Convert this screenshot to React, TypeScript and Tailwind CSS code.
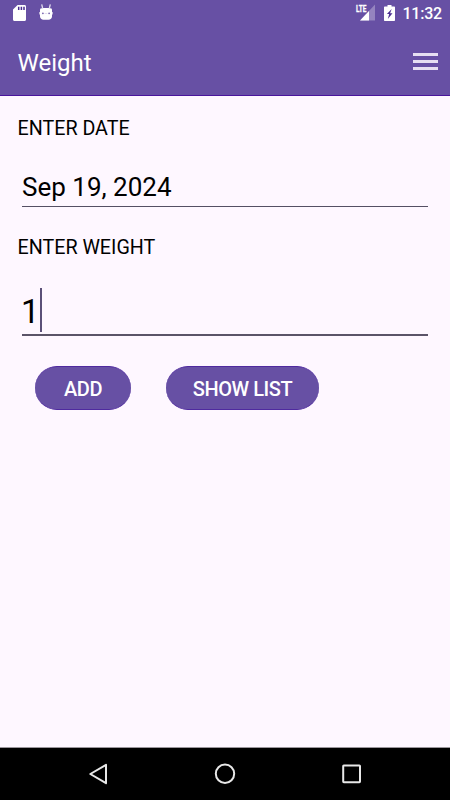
import type { ReactNode } from 'react';

function SdCardIcon() {
  return (
    <svg className="h-4 w-[13px]" viewBox="0 0 13 16" fill="none">
      <path d="M4.6 0H11.5C12.4 0 13 .6 13 1.5V14.5C13 15.4 12.4 16 11.5 16H1.5C.6 16 0 15.4 0 14.5V4.6Z" fill="#fff" />
      <path d="M5.7 1.8V5M8.4 1.8V5M11 1.8V5" stroke="#4a2c91" strokeWidth="1.5" />
    </svg>
  );
}

function AndroidIcon() {
  return (
    <svg className="h-4 w-3.5" viewBox="0 0 14 16" fill="none">
      <path d="M2.7 0.4L3.6 4M11.3 0.4L10.4 4" stroke="#fff" strokeOpacity="0.8" strokeWidth="1.3" />
      <path d="M1.5 4.6Q3 4 4.5 4H9.5Q11 4 12.5 4.6Q13 5.3 13 6.3V8H13.6V10.4H13V12.6C13 14.6 11.5 15.8 9.5 15.8H4.5C2.5 15.8 1 14.6 1 12.6V10.4H.4V8H1V6.3Q1 5.3 1.5 4.6Z" fill="#fff" />
      <circle cx="3.9" cy="9.4" r="0.8" fill="#6750a4" />
      <circle cx="10.1" cy="9.4" r="0.8" fill="#6750a4" />
      <path d="M5.7 9.5H8.3" stroke="#d8d1e8" strokeWidth="0.7" />
    </svg>
  );
}

function SignalIcon() {
  return (
    <svg className="h-[17px] w-5 overflow-visible" viewBox="0 0 20 17">
      <path d="M19 .5V16.5H4Z" fill="#fff" fillOpacity="0.3" />
      <path d="M13 7V16.5H4Z" fill="#fff" />
      <path d="M0 0H10.5V8.5H0Z" fill="#6750a4" />
      <text x="0" y="8" fill="#fff" stroke="#fff" strokeWidth="0.3" fontSize="9.5" fontWeight="700" textLength="10.5" lengthAdjust="spacingAndGlyphs">
        LTE
      </text>
    </svg>
  );
}

function BatteryIcon() {
  return (
    <svg className="h-4 w-[11px]" viewBox="0 0 11 16">
      <path d="M3.5 0H7.5V1.5H10C10.6 1.5 11 1.9 11 2.5V15C11 15.6 10.6 16 10 16H1C.4 16 0 15.6 0 15V2.5C0 1.9.4 1.5 1 1.5H3.5Z" fill="#fff" />
      <path d="M7.7 4L2.9 9H5.2L3.8 14L8.5 8.2H6.1Z" fill="#4a2c91" />
    </svg>
  );
}

function StatusBar() {
  return (
    <div className="flex h-7 items-start pl-[13px] pr-2 pt-[5px]">
      <SdCardIcon />
      <div className="-mt-px ml-[13px]">
        <AndroidIcon />
      </div>
      <div className="ml-auto flex">
        <div className="-mt-px">
          <SignalIcon />
        </div>
        <div className="ml-2">
          <BatteryIcon />
        </div>
        <span className="ml-[7px] mt-px text-[16px] leading-4 font-medium tracking-[-0.2px]">11:32</span>
      </div>
    </div>
  );
}

function MenuIcon() {
  return (
    <svg className="h-[18px] w-[25px]" viewBox="0 0 25 18">
      <path d="M0 1.5H25M0 8.5H25M0 15.5H25" stroke="#e6dff2" strokeWidth="2.8" />
    </svg>
  );
}

function FilledButton({ className, children }: { className: string; children: ReactNode }) {
  return (
    <button
      className={`h-11 rounded-full border-y border-[#4f2a9f] bg-[#6750a4] pt-0.5 text-[20px] leading-6 font-medium tracking-[-0.45px] text-white ${className}`}
    >
      {children}
    </button>
  );
}

function NavBar() {
  return (
    <nav className="mt-auto h-[53px] border-t border-[#9b969c] bg-black">
      <svg className="block h-[52px] w-full" viewBox="0 0 450 52" fill="none" stroke="#e8e8e8" strokeWidth="2">
        <path d="M106 16.8L90.3 26L106 35.2Z" strokeLinejoin="round" />
        <circle cx="225" cy="25.8" r="9.2" />
        <rect x="343.2" y="17.4" width="16.8" height="16.8" rx="0.6" />
      </svg>
    </nav>
  );
}

export default function App() {
  return (
    <div className="flex h-[800px] w-[450px] flex-col bg-[#fef7ff] font-['Roboto',sans-serif] text-black">
      <header className="h-24 border-b border-[#4a159c] bg-[#6750a4] text-white">
        <StatusBar />
        <div className="flex h-[67px] items-center justify-between pl-[17.5px] pr-3">
          <h1 className="pt-0.5 text-[24px] leading-7">Weight</h1>
          <MenuIcon />
        </div>
      </header>

      <main className="px-[18px] pt-[21px]">
        <label className="-ml-[0.5px] block text-[19.7px] leading-6">ENTER DATE</label>
        <div className="mx-1 mt-[26px] h-[40px] border-b border-[#555064] text-[26px] leading-[40px]">
          Sep 19, 2024
        </div>

        <label className="-ml-[0.5px] mt-[29px] block text-[19.7px] leading-6">ENTER WEIGHT</label>
        <div className="mx-1 mt-7 flex h-12 border-b-2 border-[#5b5468]">
          <span className="-ml-px text-[33px] leading-[48px]">1</span>
          <span className="h-11 w-0.5 bg-[#5b5078]" />
        </div>

        <div className="mt-[30px] flex gap-[35px] pl-[17px]">
          <FilledButton className="w-24">ADD</FilledButton>
          <FilledButton className="w-[153px]">SHOW LIST</FilledButton>
        </div>
      </main>

      <NavBar />
    </div>
  );
}
